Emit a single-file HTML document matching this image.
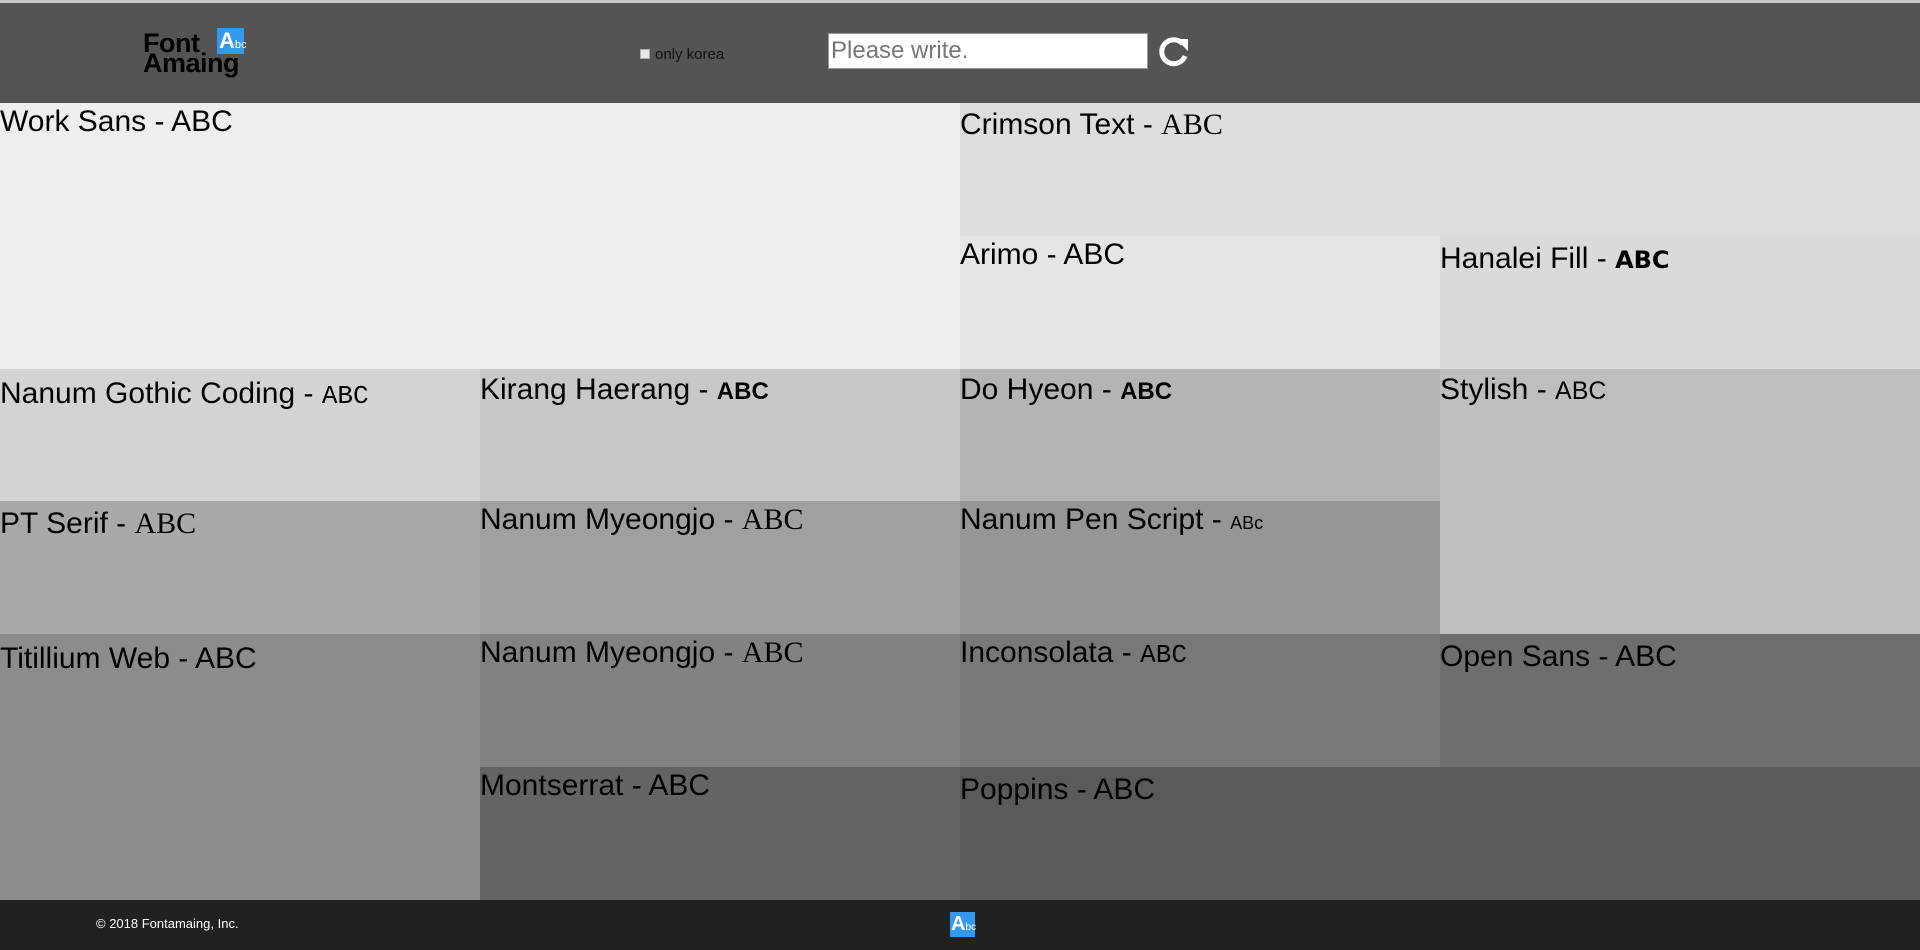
<!DOCTYPE html>
<html><head><meta charset="utf-8"><style>
*{margin:0;padding:0;box-sizing:border-box}
body{width:1920px;height:950px;overflow:hidden;background:#eee;font-family:"Liberation Sans",sans-serif;position:relative}
.hd{position:absolute;left:0;top:0;width:1920px;height:103px;background:#545454;border-top:3px solid #c8c8c8}
.c{position:absolute;font-size:30px;line-height:38px;color:#000;white-space:nowrap;overflow:hidden}
.s{font-family:"Liberation Serif",serif}
.b{font-weight:bold;font-size:24px}
.m{font-family:"Liberation Mono",monospace;font-size:26px}
.ft{position:absolute;left:0;top:900px;width:1920px;height:50px;background:#212121}
</style></head><body>
<div class="hd">
 <div style="position:absolute;left:143px;top:30px;font-weight:bold;font-size:27px;line-height:20px;color:#000;letter-spacing:-0.5px">Font<br>Amaing</div>
 <div style="position:absolute;left:217px;top:25px;width:27px;height:26px;background:#3399ee;color:#fff;font-weight:bold;font-size:22px;line-height:26px;padding-left:2px">A<span style="font-size:11px;font-weight:normal">bc</span></div>
 <div style="position:absolute;left:640px;top:46px;width:10px;height:10px;background:#e8e8e8;border:1px solid #aaa"></div>
 <div style="position:absolute;left:655px;top:43px;font-size:15px;color:#111">only korea</div>
 <div style="position:absolute;left:828px;top:30px;width:320px;height:36px;background:#fff;border:1px solid #999;font-size:24px;line-height:33px;color:#777;padding-left:2px">Please write.</div>
 <svg style="position:absolute;left:1157px;top:32px" width="34" height="34" viewBox="0 0 34 34"><path d="M26 9 A12 12 0 1 0 28 21" fill="none" stroke="#fff" stroke-width="5"/><path d="M19 4 L31 4 L31 16 Z" fill="#fff"/></svg>
</div>
<div class="c" style="left:0;top:103px;width:960px;height:266px;background:#eee">Work Sans - ABC</div>
<div class="c" style="left:960px;top:103px;width:960px;height:133px;background:#ddd;padding-top:3px">Crimson Text - <span class="s">ABC</span></div>
<div class="c" style="left:960px;top:236px;width:480px;height:133px;background:#e5e5e5">Arimo - ABC</div>
<div class="c" style="left:1440px;top:236px;width:480px;height:133px;background:#dadada;padding-top:4px">Hanalei Fill - <span class="b" style="font-family:'DejaVu Sans';font-weight:900">ABC</span></div>
<div class="c" style="left:0;top:369px;width:480px;height:132px;background:#d3d3d3;padding-top:6px">Nanum Gothic Coding - <span class="m">ABC</span></div>
<div class="c" style="left:480px;top:369px;width:480px;height:132px;background:#c8c8c8;padding-top:2px">Kirang Haerang - <span class="b">ABC</span></div>
<div class="c" style="left:960px;top:369px;width:480px;height:132px;background:#b4b4b4;padding-top:2px">Do Hyeon - <span class="b">ABC</span></div>
<div class="c" style="left:1440px;top:369px;width:480px;height:265px;background:#bebebe;padding-top:2px">Stylish - <span style="font-size:25px">ABC</span></div>
<div class="c" style="left:0;top:501px;width:480px;height:133px;background:#a9a9a9;padding-top:4px">PT Serif - <span class="s">ABC</span></div>
<div class="c" style="left:480px;top:501px;width:480px;height:133px;background:#a0a0a0">Nanum Myeongjo - <span class="s">ABC</span></div>
<div class="c" style="left:960px;top:501px;width:480px;height:133px;background:#969696">Nanum Pen Script - <span style="font-size:18px">ABc</span></div>
<div class="c" style="left:0;top:634px;width:480px;height:266px;background:#8c8c8c;padding-top:6px">Titillium Web - ABC</div>
<div class="c" style="left:480px;top:634px;width:480px;height:133px;background:#828282">Nanum Myeongjo - <span class="s">ABC</span></div>
<div class="c" style="left:960px;top:634px;width:480px;height:133px;background:#787878">Inconsolata - <span class="m">ABC</span></div>
<div class="c" style="left:1440px;top:634px;width:480px;height:133px;background:#6e6e6e;padding-top:4px">Open Sans - ABC</div>
<div class="c" style="left:480px;top:767px;width:480px;height:133px;background:#646464">Montserrat - ABC</div>
<div class="c" style="left:960px;top:767px;width:960px;height:133px;background:#5a5a5a;padding-top:4px">Poppins - ABC</div>
<div class="ft">
 <div style="position:absolute;left:96px;top:16px;font-size:13px;color:#fff">© 2018 Fontamaing, Inc.</div>
 <div style="position:absolute;left:950px;top:12px;width:25px;height:25px;background:#3399ee;color:#fff;font-weight:bold;font-size:20px;line-height:25px;padding-left:1px">A<span style="font-size:10px;font-weight:normal">bc</span></div>
</div>
</body></html>
